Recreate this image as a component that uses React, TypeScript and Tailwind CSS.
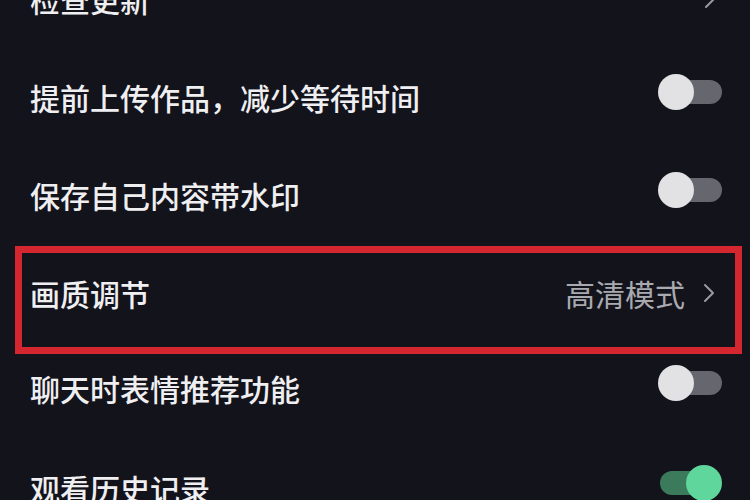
import React from "react";

const Chevron = ({ color = "#9a9aa2" }: { color?: string }) => (
  <svg width="12" height="20" viewBox="0 0 12 20" fill="none">
    <polyline points="2,2 10,10 2,18" stroke={color} strokeWidth="2" strokeLinecap="round" strokeLinejoin="round" />
  </svg>
);

const Toggle = ({ on = false }: { on?: boolean }) => (
  <div className="relative w-[64px] h-[36px] mb-[10px]">
    <div
      className={
        on
          ? "absolute left-[2px] right-[14px] top-[6px] bottom-[6px] rounded-full bg-[#3c7a5c]"
          : "absolute left-[4px] right-0 top-[6px] bottom-[6px] rounded-full bg-[#66666e]"
      }
    />
    <div
      className={
        on
          ? "absolute right-0 top-0 w-[36px] h-[36px] rounded-full bg-[#5fd69b]"
          : "absolute left-0 top-0 w-[36px] h-[36px] rounded-full bg-[#e2e2e5]"
      }
    />
  </div>
);

const Label = ({ children }: { children: React.ReactNode }) => (
  <span className="text-[30px] leading-none font-medium text-[#efeff1] whitespace-nowrap">{children}</span>
);

export default function App() {
  return (
    <div
      className="w-[750px] h-[500px] overflow-hidden bg-[#13131c]"
      style={{ fontFamily: '"Noto Sans CJK SC", "Noto Sans", sans-serif' }}
    >
      <div className="-mt-[50px] flex flex-col">
        <div className="h-[98px] flex items-center justify-between pl-[30px] pr-[34px]">
          <Label>检查更新</Label>
          <Chevron />
        </div>
        <div className="h-[98px] flex items-center justify-between pl-[30px] pr-[28px]">
          <Label>提前上传作品，减少等待时间</Label>
          <Toggle />
        </div>
        <div className="h-[98px] flex items-center justify-between pl-[30px] pr-[28px]">
          <Label>保存自己内容带水印</Label>
          <Toggle />
        </div>
        <div className="mt-[2px] ml-[15px] mr-[8px] h-[108px] border-[7px] border-[#d3262f] flex items-center justify-between pl-[8px] pr-[20px] pb-[14px]">
          <Label>画质调节</Label>
          <div className="flex items-center gap-[18px]">
            <span className="text-[30px] leading-none text-[#a9a9b0] whitespace-nowrap">高清模式</span>
            <Chevron />
          </div>
        </div>
        <div className="h-[68px] flex items-center justify-between pl-[30px] pr-[28px]">
          <Label>聊天时表情推荐功能</Label>
          <Toggle />
        </div>
        <div className="h-[132px] flex items-center justify-between pl-[30px] pr-[28px]">
          <Label>观看历史记录</Label>
          <Toggle on />
        </div>
      </div>
    </div>
  );
}
